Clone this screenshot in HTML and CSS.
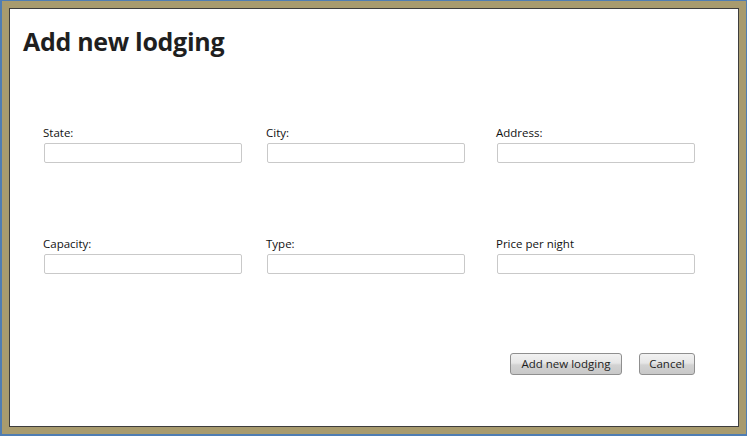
FILE: index.html
```html
<!DOCTYPE html>
<html>
<head>
<meta charset="utf-8">
<link rel="stylesheet" href="styles.css">
</head>
<body>
<div class="window">
  <div class="panel">
    <h1 class="title">Add new lodging</h1>
    <div class="form">
      <div class="field"><label>State:</label><input type="text"></div>
      <div class="field"><label>City:</label><input type="text"></div>
      <div class="field col3"><label>Address:</label><input type="text"></div>
      <div class="field row2"><label>Capacity:</label><input type="text"></div>
      <div class="field row2"><label>Type:</label><input type="text"></div>
      <div class="field row2 col3"><label>Price per night</label><input type="text"></div>
    </div>
    <div class="actions">
      <button class="btn btn-add">Add new lodging</button>
      <button class="btn btn-cancel">Cancel</button>
    </div>
  </div>
</div>
</body>
</html>
```
FILE: styles.css
```css
* { box-sizing: border-box; }
html, body { margin: 0; padding: 0; }
body {
  width: 747px;
  height: 436px;
  background: #4f7db3;
  padding: 1px 1px 2px 2px;
  font-family: "Open Sans", "Noto Sans", sans-serif;
}
.window {
  width: 744px;
  height: 433px;
  border: 7px solid #a89b6e;
}
.panel {
  width: 100%;
  height: 100%;
  background: #fff;
  border: 1px solid #3d3d3d;
  display: flex;
  flex-direction: column;
  padding: 0 0 0 13px;
}
.title {
  margin: 15px 0 0 0;
  font-size: 25px;
  font-weight: 700;
  color: #1f1f1f;
  line-height: 35px;
  letter-spacing: -0.3px;
}
.form {
  margin: 66px 0 0 21px;
  display: grid;
  grid-template-columns: 223px 230px 198px;
  row-gap: 73px;
}
.field {
  display: flex;
  flex-direction: column;
}
.field label {
  font-size: 11.5px;
  line-height: 16px;
  color: #111;
  margin: 0 0 2px -1px;
}
.field input {
  width: 198px;
  height: 20px;
  border: 1px solid #c9c9c9;
  border-radius: 2px;
  background: #fff;
  margin: 0;
  padding: 0;
}
.actions {
  margin-top: auto;
  margin-bottom: 51px;
  display: flex;
  justify-content: flex-end;
  gap: 17px;
  padding-right: 43px;
}
.btn {
  height: 22px;
  font-family: "Open Sans", "Noto Sans", sans-serif;
  font-size: 11.5px;
  color: #1e1e1e;
  border: 1px solid #8f8f8f;
  border-radius: 3px;
  background: linear-gradient(#f2f2f2 0%, #e6e6e6 45%, #d2d2d2 55%, #c8c8c8 100%);
  padding: 0;
  line-height: 18px;
}
.btn-add { width: 112px; }
.btn-cancel { width: 56px; }
```
